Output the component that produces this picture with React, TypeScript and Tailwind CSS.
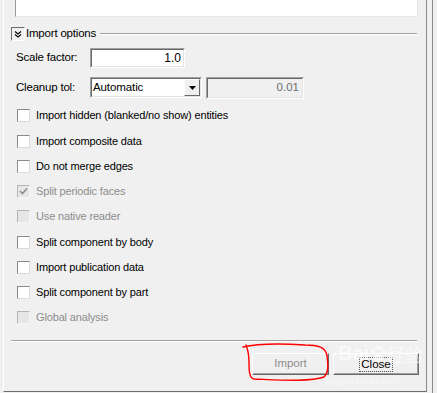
import React from "react";

const font = { fontFamily: '"Liberation Sans", Arial, sans-serif' };

function CheckBox({ checked, disabled }: { checked?: boolean; disabled?: boolean }) {
  return (
    <div
      className={
        disabled
          ? "w-[13px] h-[13px] border border-t-[#b5b5b5] border-l-[#b5b5b5] border-r-[#f5f5f5] border-b-[#f5f5f5] bg-[#e6e6e6] flex items-center justify-center shrink-0"
          : "w-[13px] h-[13px] border border-t-[#8a8a8a] border-l-[#8a8a8a] border-r-[#dcdcdc] border-b-[#dcdcdc] bg-white flex items-center justify-center shrink-0"
      }
    >
      {checked && (
        <svg width="9" height="9" viewBox="0 0 9 9">
          <path d="M1 4 L3.5 6.5 L8 1.5" fill="none" stroke="#8d8d8d" strokeWidth="1.6" />
        </svg>
      )}
    </div>
  );
}

const rows: { label: string; h: string; disabled?: boolean; checked?: boolean }[] = [
  { label: "Import hidden (blanked/no show) entities", h: "h-[25px]" },
  { label: "Import composite data", h: "h-[26px]" },
  { label: "Do not merge edges", h: "h-[25px]" },
  { label: "Split periodic faces", h: "h-[25px]", disabled: true, checked: true },
  { label: "Use native reader", h: "h-[25px]", disabled: true },
  { label: "Split component by body", h: "h-[26px]" },
  { label: "Import publication data", h: "h-[25px]" },
  { label: "Split component by part", h: "h-[25px]" },
  { label: "Global analysis", h: "h-[25px]", disabled: true },
];

export default function App() {
  return (
    <div
      className="w-[437px] h-[393px] bg-[#f0f0f0] flex relative overflow-hidden text-[11px] text-black"
      style={font}
    >
      <div className="w-[3px] shrink-0" />
      {/* main panel */}
      <div className="w-[424px] h-[392px] border-l border-l-white border-r border-r-[#8a8a8a] border-b border-b-[#6d6d6d] flex flex-col">
        {/* top text area (cut off) */}
        <div className="ml-[11px] w-[403px] h-[17px] bg-white border-l border-l-[#9a9a9a] border-r border-r-[#e3e3e3] border-b border-b-[#e8e8e8]" />

        {/* group header */}
        <div className="mt-[10px] h-[14px] flex items-center">
          <div className="ml-[7px] w-[14px] h-[14px] border border-t-[#6d6d6d] border-l-[#6d6d6d] border-r-white border-b-white bg-[#f0f0f0] flex items-center justify-center">
            <svg width="8" height="9" viewBox="0 0 8 9">
              <path d="M1 1.5 L4 4 L7 1.5" fill="none" stroke="#000" strokeWidth="1.1" />
              <path d="M1 4.5 L4 7 L7 4.5" fill="none" stroke="#000" strokeWidth="1.1" />
            </svg>
          </div>
          <span className="ml-[1px] text-[11.5px] leading-none tracking-[-0.2px]">Import options</span>
          <div className="ml-[4px] flex-1 mr-[9px] flex flex-col">
            <div className="h-px bg-[#a0a0a0]" />
            <div className="h-px bg-white" />
          </div>
        </div>

        {/* Scale factor */}
        <div className="mt-[7px] h-[20px] flex items-center">
          <span className="ml-[12px] w-[74px] text-[11.5px] tracking-[-0.2px]">Scale factor:</span>
          <div className="w-[95px] h-[20px] border border-t-[#a0a0a0] border-l-[#a0a0a0] border-r-white border-b-white">
            <div className="h-full border border-t-[#696969] border-l-[#696969] border-r-[#e3e3e3] border-b-[#e3e3e3] bg-white flex items-center justify-end pr-[2px] text-[12px]">
              1.0
            </div>
          </div>
        </div>

        {/* Cleanup tol */}
        <div className="mt-[9px] h-[21px] flex items-center">
          <span className="ml-[12px] w-[74px] text-[11.5px] tracking-[-0.2px]">Cleanup tol:</span>
          <div className="w-[112px] h-[21px] border border-t-[#a0a0a0] border-l-[#a0a0a0] border-r-white border-b-white">
            <div className="h-full border border-t-[#696969] border-l-[#696969] border-r-[#e3e3e3] border-b-[#e3e3e3] bg-white flex items-center">
              <span className="flex-1 pl-[1px] text-[11.5px] tracking-[-0.1px]">Automatic</span>
              <div className="w-[16px] h-full border border-t-white border-l-white border-r-[#696969] border-b-[#696969] bg-[#f0f0f0] flex items-center justify-center">
                <svg width="7" height="4" viewBox="0 0 7 4">
                  <path d="M0 0 H7 L3.5 4 Z" fill="#000" />
                </svg>
              </div>
            </div>
          </div>
          <div className="ml-[4px] w-[98px] h-[22px] border border-t-[#a0a0a0] border-l-[#a0a0a0] border-r-white border-b-white">
            <div className="h-full border border-t-[#696969] border-l-[#696969] border-r-[#e3e3e3] border-b-[#e3e3e3] bg-[#f0f0f0] flex items-center justify-end pr-[3px] text-[11.5px] text-[#6d6d6d]">
              0.01
            </div>
          </div>
        </div>

        {/* checkboxes */}
        <div className="mt-[5px] flex flex-col">
          {rows.map((r) => (
            <div key={r.label} className={r.h + " flex items-center"}>
              <div className="ml-[13px]">
                <CheckBox checked={r.checked} disabled={r.disabled} />
              </div>
              <span
                className={
                  r.disabled
                    ? "ml-[6px] text-[11px] tracking-[-0.15px] text-[#8d8d8d]"
                    : "ml-[6px] text-[11px] tracking-[-0.15px]"
                }
              >
                {r.label}
              </span>
            </div>
          ))}
        </div>

        {/* separator */}
        <div className="mt-[10px] ml-[7px] w-[406px] flex flex-col">
          <div className="h-px bg-[#a0a0a0]" />
          <div className="h-px bg-white" />
        </div>

        {/* buttons */}
        <div className="mt-[11px] flex">
          <div className="ml-[248px] w-[77px] h-[22px] border border-t-white border-l-white border-r-[#696969] border-b-[#696969]">
            <div className="h-full border border-t-[#f0f0f0] border-l-[#f0f0f0] border-r-[#a0a0a0] border-b-[#a0a0a0] flex items-center justify-center text-[11.5px] text-[#8d8d8d]">
              Import
            </div>
          </div>
          <div className="ml-[4px] w-[86px] h-[22px] border border-t-white border-l-white border-r-[#696969] border-b-[#696969]">
            <div className="h-full border border-t-[#f0f0f0] border-l-[#f0f0f0] border-r-[#a0a0a0] border-b-[#a0a0a0] flex items-center justify-center">
              <span className="px-[1px] border border-dotted border-[#555] leading-[13px] text-[11.5px]">Close</span>
            </div>
          </div>
        </div>
      </div>

      <div className="w-[5px] shrink-0" />
      <div className="w-px bg-[#8a8a8a] shrink-0" />

      {/* watermark */}
      <div className="absolute left-[338px] top-[343px] flex items-end gap-[1px] text-white/60 pointer-events-none">
        <span className="text-[20px] font-bold leading-none" style={{ fontFamily: '"Liberation Sans", sans-serif' }}>Bai</span>
        <svg width="16" height="18" viewBox="0 0 16 18" className="opacity-60">
          <circle cx="3" cy="6" r="2" fill="#fff" />
          <circle cx="7" cy="3" r="2" fill="#fff" />
          <circle cx="11" cy="3" r="2" fill="#fff" />
          <circle cx="14" cy="7" r="2" fill="#fff" />
          <ellipse cx="8.5" cy="13" rx="4.5" ry="4" fill="#fff" />
        </svg>
        <span className="text-[18px] leading-none" style={{ fontFamily: '"Noto Sans CJK SC", sans-serif' }}>经验</span>
      </div>
      <div className="absolute left-[325px] top-[375px] text-[9px] text-white/50 pointer-events-none">jingyan.baidu.com</div>

      {/* red hand-drawn circle */}
      <svg className="absolute left-0 top-0 pointer-events-none" width="437" height="393">
        <path
          d="M243 347 C260 343 290 344 305 345 C318 345 326 347 327 356 C328 364 329 372 324 377 C310 382 280 380 254 379 C249 378 249 370 249 362 C249 355 248 350 246 345"
          fill="none"
          stroke="#ff0000"
          strokeWidth="1.4"
          strokeLinecap="round"
        />
      </svg>
    </div>
  );
}
